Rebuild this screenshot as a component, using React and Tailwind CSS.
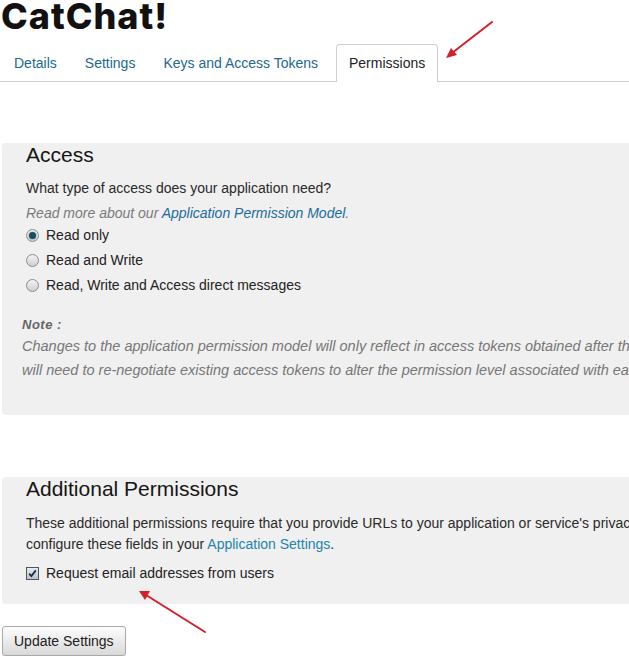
import React from 'react';

const tabs = ['Details', 'Settings', 'Keys and Access Tokens'];

function Radio({ checked }) {
  return (
    <span className="relative flex h-[13px] w-[13px] items-center justify-center rounded-full border border-[#8c8c8c] bg-gradient-to-b from-[#f4f4f4] to-[#cfcfcf]">
      {checked && <span className="h-[7px] w-[7px] rounded-full bg-[#1d4b5e] shadow-[0_0_2px_#5a9ab5]" />}
    </span>
  );
}

function Checkbox() {
  return (
    <span className="flex h-[13px] w-[13px] items-center justify-center border border-[#555] bg-gradient-to-b from-[#e6ebf2] to-[#b9c3d0]">
      <svg width="9" height="9" viewBox="0 0 9 9">
        <path d="M1.2 4.6 L3.4 7 L7.8 1.4" fill="none" stroke="#1f2a44" strokeWidth="1.8" />
      </svg>
    </span>
  );
}

export default function App() {
  return (
    <div className="relative h-[656px] w-[629px] overflow-hidden bg-white font-['Liberation_Sans',Arial,sans-serif] text-[14px] text-[#333]">
      {/* Title */}
      <div className="flex h-[44px] items-start pl-[1px]">
        <h1 className="-mt-[2px] font-['Inter',sans-serif] text-[36px] font-extrabold leading-[36px] tracking-[1px] text-[#111]">CatChat!</h1>
      </div>

      {/* Tabs */}
      <div className="flex h-[38px] border-b border-[#cfcfcf]">
        {tabs.map(t => (
          <div key={t} className="flex h-[38px] items-center px-[14px] text-[#22698c]">{t}</div>
        ))}
        <div className="-mb-px ml-[4px] flex h-[38px] items-center rounded-t-[4px] border border-b-0 border-[#cfcfcf] bg-white px-[12px] text-[#222]">
          Permissions
        </div>
      </div>

      <div className="h-[61px]" />

      {/* Access panel */}
      <div className="ml-[2px] h-[272px] w-[900px] rounded-[4px] bg-[#f0f0f0] pl-[24px]">
        <h2 className="h-[24px] text-[21px] leading-[24px] text-[#151515]">Access</h2>
        <div className="mt-[9px] h-[24px] leading-[24px] text-[#2a2a2a]">What type of access does your application need?</div>
        <div className="mt-[3px] h-[20px] italic leading-[20px] text-[#7a7a7a]">
          Read more about our <span className="text-[#1b6c98]">Application Permission Model</span>.
        </div>
        {[
          ['Read only', true],
          ['Read and Write', false],
          ['Read, Write and Access direct messages', false],
        ].map(([label, checked]) => (
          <div key={label} className="flex h-[25px] items-center gap-[7px] text-[#222]">
            <Radio checked={checked} />
            <span>{label}</span>
          </div>
        ))}
        <div className="-ml-[4px] mt-[17px] h-[20px] text-[13px] font-bold italic leading-[20px] tracking-[0.5px] text-[#666]">Note :</div>
        <div className="-ml-[4px] -mt-[1px] whitespace-nowrap text-[14.5px] italic leading-[24px] text-[#777]">
          Changes to the application permission model will only reflect in access tokens obtained after the permission model change is saved.
          <br />
          will need to re-negotiate existing access tokens to alter the permission level associated with each of your application's users.
        </div>
      </div>

      <div className="h-[62px]" />

      {/* Additional permissions panel */}
      <div className="ml-[2px] h-[127px] w-[900px] rounded-[4px] bg-[#f0f0f0] pl-[24px]">
        <h2 className="h-[24px] text-[21px] leading-[24px] text-[#151515]">Additional Permissions</h2>
        <div className="mt-[12px] whitespace-nowrap leading-[21px] text-[#2a2a2a]">
          These additional permissions require that you provide URLs to your application or service's privacy policy and terms of service. You can
          <br />
          configure these fields in your <span className="text-[#2484aa]">Application Settings</span>.
        </div>
        <div className="mt-[8px] flex h-[20px] items-center gap-[7px] text-[#222]">
          <Checkbox />
          <span>Request email addresses from users</span>
        </div>
      </div>

      <div className="h-[22px]" />

      <button className="ml-[2px] h-[30px] rounded-[3px] border border-[#a9a9a9] bg-gradient-to-b from-[#fdfdfd] to-[#d9d9d9] px-[11px] text-[14px] text-[#222] shadow-[0_1px_1px_rgba(0,0,0,0.15)]">
        Update Settings
      </button>

      {/* Red annotation arrows */}
      <svg className="pointer-events-none absolute left-0 top-0" width="629" height="656">
        <g stroke="#d3202c" strokeWidth="2" fill="#d3202c" strokeLinecap="round">
          <line x1="492" y1="22" x2="452" y2="53" />
          <polygon points="446,58 451,48 457,55" stroke="none" />
          <line x1="205" y1="632" x2="146" y2="595" />
          <polygon points="139,591 150,591 145,600" stroke="none" />
        </g>
      </svg>
    </div>
  );
}
